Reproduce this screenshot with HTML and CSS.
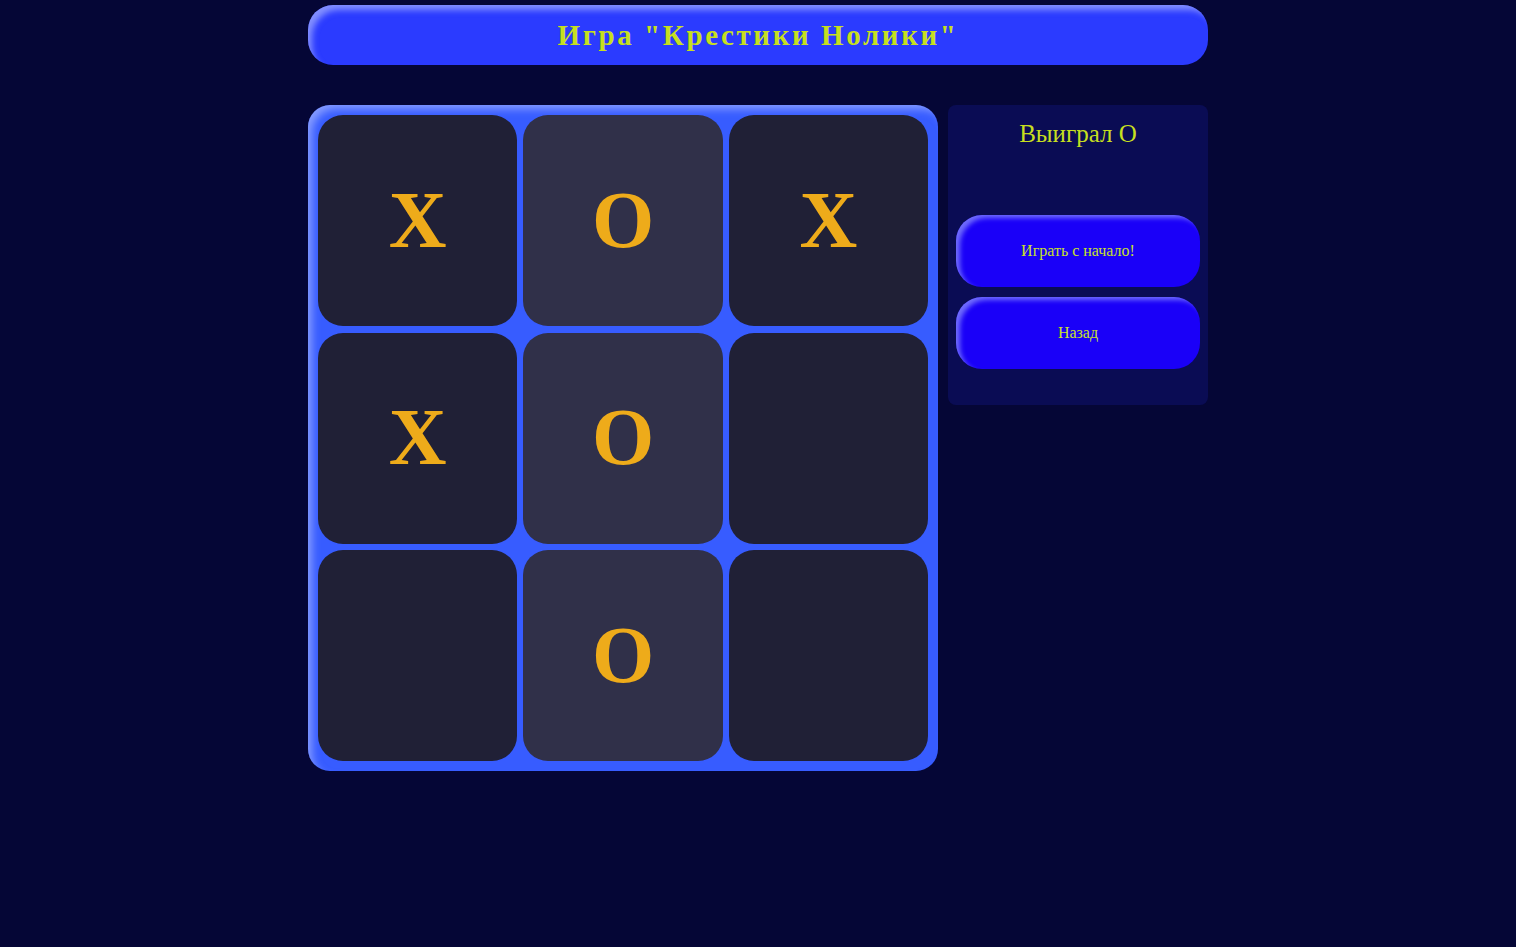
FILE: index.html
```html
<!DOCTYPE html>
<html lang="ru">
<head>
<meta charset="utf-8">
<title>Крестики Нолики</title>
<link rel="stylesheet" href="styles.css">
</head>
<body>
<div class="page">
  <header class="header"><h1 class="title">Игра "Крестики Нолики"</h1></header>
  <main class="main">
    <div class="board">
      <div class="cell">X</div>
      <div class="cell mid">O</div>
      <div class="cell">X</div>
      <div class="cell">X</div>
      <div class="cell mid">O</div>
      <div class="cell"></div>
      <div class="cell"></div>
      <div class="cell mid">O</div>
      <div class="cell"></div>
    </div>
    <aside class="panel">
      <div class="status">Выиграл О</div>
      <div class="buttons">
        <button class="btn">Играть с начало!</button>
        <button class="btn">Назад</button>
      </div>
    </aside>
  </main>
</div>
</body>
</html>
```
FILE: styles.css
```css
html, body {
  margin: 0;
  padding: 0;
  background: #050636;
  font-family: "Liberation Serif", "Times New Roman", serif;
}
.page {
  width: 900px;
  margin: 0 auto;
  padding-top: 5px;
}
.header {
  height: 60px;
  border-radius: 25px;
  background: #2b3bff;
  box-shadow: inset 6px 7px 6px -2px rgba(190, 200, 255, 0.6);
  display: flex;
  align-items: center;
  justify-content: center;
}
.title {
  margin: 0;
  font-size: 29px;
  font-weight: bold;
  letter-spacing: 2.6px;
  color: #c6df1f;
}
.main {
  display: flex;
  gap: 10px;
  margin-top: 40px;
  align-items: flex-start;
}
.board {
  width: 630px;
  box-sizing: border-box;
  padding: 10px;
  border-radius: 22px;
  background: #375cff;
  box-shadow: inset 6px 6px 8px -2px rgba(200, 210, 255, 0.55);
  display: grid;
  grid-template-columns: repeat(3, 1fr);
  grid-template-rows: repeat(3, 211px);
  gap: 6.5px 6px;
}
.cell {
  background: #202036;
  border-radius: 25px;
  display: flex;
  align-items: center;
  justify-content: center;
  color: #eeab1a;
  font-weight: bold;
  font-size: 80px;
  line-height: 1;
  padding-bottom: 2px;
}
.cell.mid {
  background: #303049;
}
.panel {
  width: 260px;
  height: 300px;
  box-sizing: border-box;
  background: #0a0c54;
  border-radius: 8px;
  padding: 14px 8px;
}
.status {
  text-align: center;
  color: #c6df1f;
  font-size: 25px;
  line-height: 30px;
}
.buttons {
  margin-top: 66px;
  display: flex;
  flex-direction: column;
  gap: 10px;
}
.btn {
  height: 72px;
  border: none;
  border-radius: 26px;
  background: #1a00f8;
  box-shadow: inset 5px 4px 5px -1px rgba(170, 180, 255, 0.6);
  color: #c8e02a;
  font-family: "Liberation Serif", "Times New Roman", serif;
  font-size: 16px;
  cursor: pointer;
}
```
